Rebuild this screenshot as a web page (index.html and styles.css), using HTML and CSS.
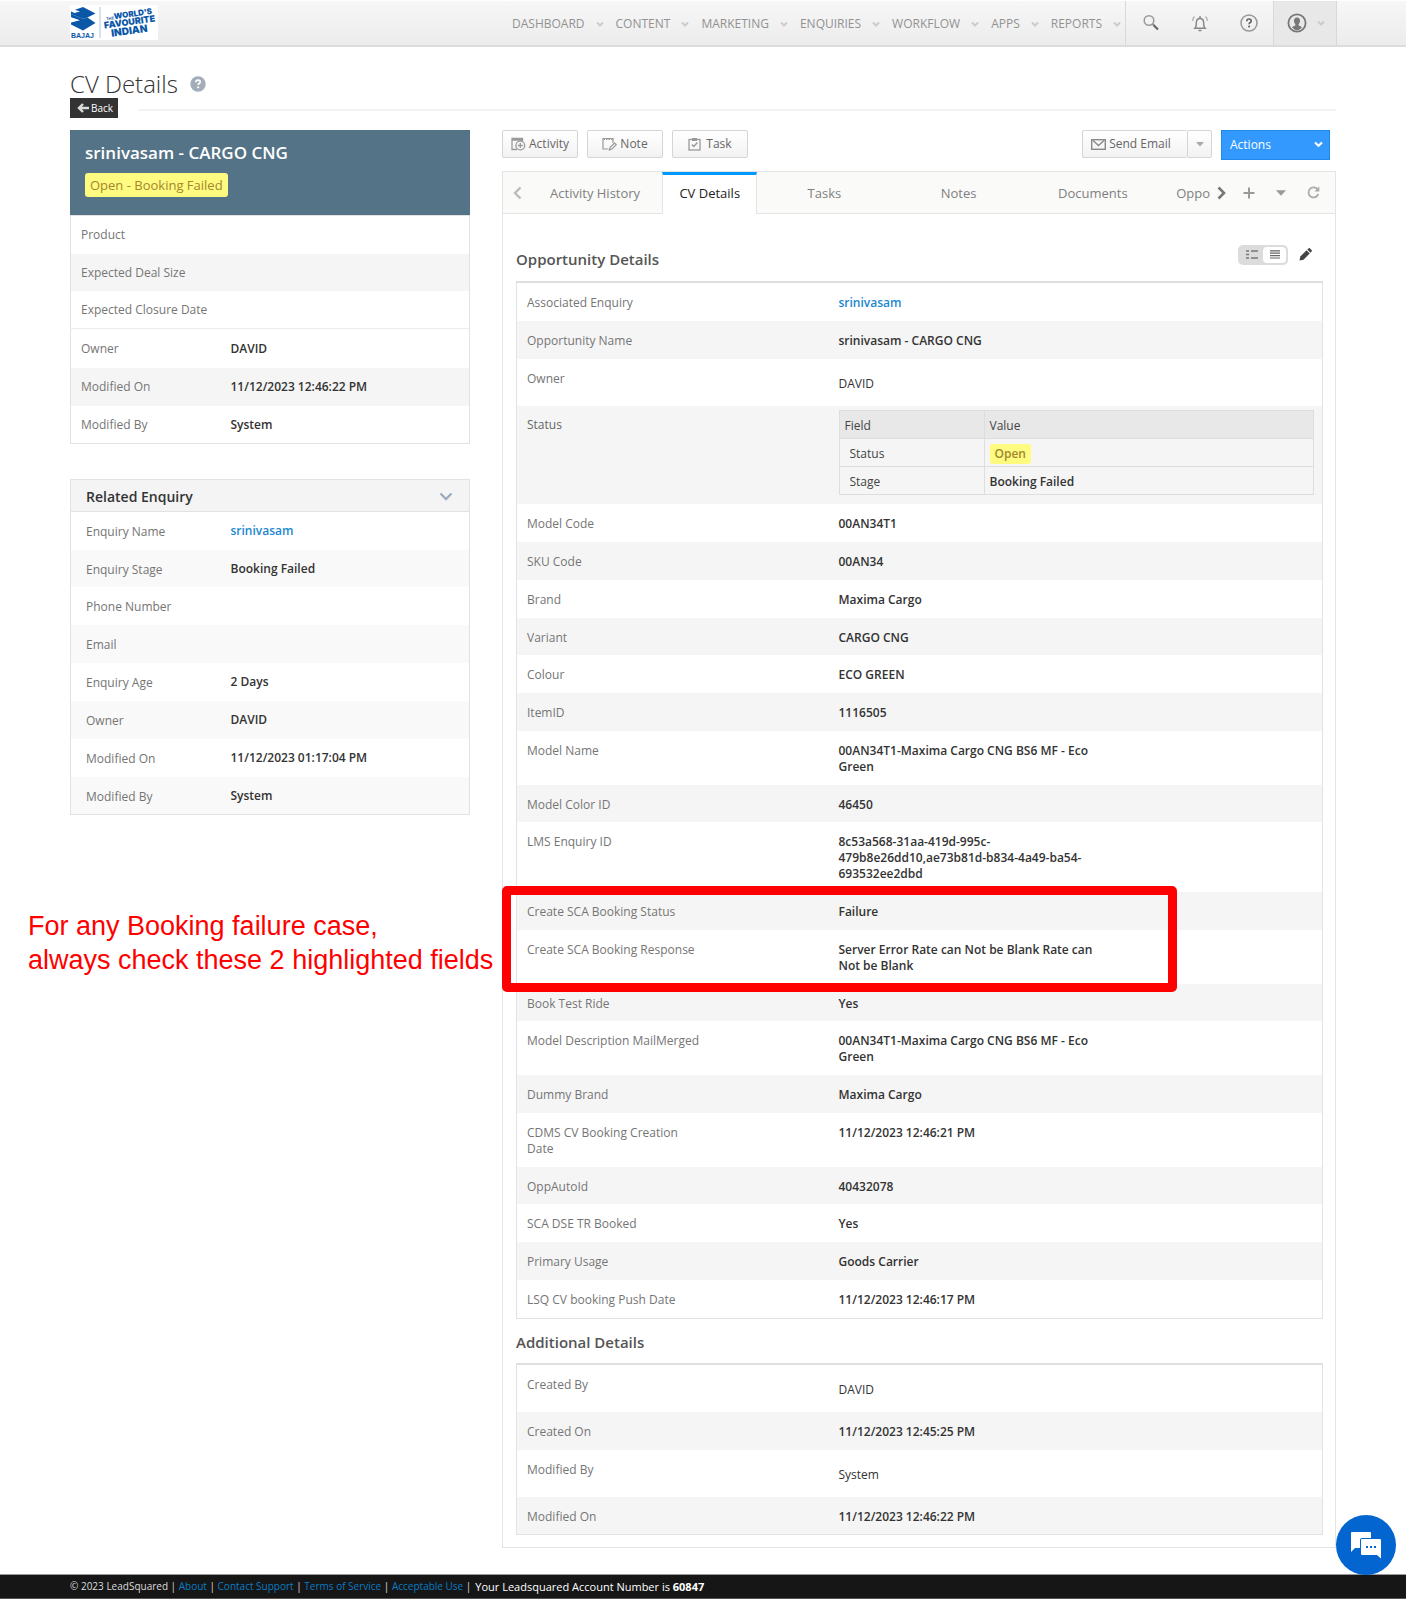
FILE: index.html
```html
<!DOCTYPE html>
<html lang="en">
<head>
<meta charset="utf-8">
<title>CV Details</title>
<link rel="stylesheet" href="styles.css">
</head>
<body>
<header class="topbar">
  <a class="logo" href="#" aria-label="Bajaj">
    <svg width="88" height="35" viewBox="0 0 88 35">
      <rect width="88" height="35" fill="#fff"/>
      <g fill="#0a57a8">
        <path d="M13 2L25.500 8.500L17.500 12.500L13.500 14L1 9V6.500L4.500 8L10 6.500L5 4.800Z"/>
        <path d="M17.500 12.500L25.500 18L13 25.500L1 19.500L1 17.500L10 15.200L1 12.500V9L13.500 14Z"/>
        <path d="M1 12.200L8 14.800L1 17.200Z" fill="#fff"/>
        <text x="1" y="33" class="logo-name">BAJAJ</text>
        <rect x="29" y="2" width="2" height="31" fill="#d5e2f0"/>
        <g transform="rotate(-8 60 18)">
          <text x="37" y="12" class="logo-the">THE</text>
          <text x="45" y="12" class="logo-line">WORLD'S</text>
          <text x="34" y="20" class="logo-line logo-mid">FAVOURITE</text>
          <text x="40" y="29" class="logo-line logo-big">INDIAN</text>
        </g>
      </g>
    </svg>
  </a>
  <nav class="nav">
    <a href="#">DASHBOARD<svg class="chev" viewBox="0 0 8 6"><path d="M1 1.500l3 3 3-3"/></svg></a>
    <a href="#">CONTENT<svg class="chev" viewBox="0 0 8 6"><path d="M1 1.500l3 3 3-3"/></svg></a>
    <a href="#">MARKETING<svg class="chev" viewBox="0 0 8 6"><path d="M1 1.500l3 3 3-3"/></svg></a>
    <a href="#">ENQUIRIES<svg class="chev" viewBox="0 0 8 6"><path d="M1 1.500l3 3 3-3"/></svg></a>
    <a href="#">WORKFLOW<svg class="chev" viewBox="0 0 8 6"><path d="M1 1.500l3 3 3-3"/></svg></a>
    <a href="#">APPS<svg class="chev" viewBox="0 0 8 6"><path d="M1 1.500l3 3 3-3"/></svg></a>
    <a href="#">REPORTS<svg class="chev" viewBox="0 0 8 6"><path d="M1 1.500l3 3 3-3"/></svg></a>
  </nav>
  <div class="tools">
    <button class="tool" aria-label="Search"><svg width="18" height="18" viewBox="0 0 18 18" fill="none"><circle cx="7" cy="6.500" r="4.800" stroke="#999" stroke-width="1.500"/><path d="M10.500 10l1.500 1.500" stroke="#888" stroke-width="1.500"/><path d="M11.500 11l4.500 4.500" stroke="#666" stroke-width="2.200"/></svg></button>
    <button class="tool" aria-label="Notifications"><svg width="18" height="18" viewBox="0 0 18 18" fill="none" stroke="#888" stroke-width="1.500"><path d="M4 14.300c1.500-1.500 1.300-3 1.300-5.300 0-2.800 1.500-4.600 3.700-4.600s3.700 1.800 3.700 4.600c0 2.300-.2 3.800 1.300 5.300z"/><path d="M9 2v2.400M7.500 16.500h3"/><path d="M3.500 2.500C2.200 3.500 1.600 5 1.600 7M14.500 2.500c1.300 1 1.900 2.500 1.900 4.500" stroke-width="1.200" stroke="#aaa"/></svg></button>
    <button class="tool" aria-label="Help"><svg width="18" height="18" viewBox="0 0 18 18"><circle cx="9" cy="9" r="8" fill="none" stroke="#999" stroke-width="1.500"/><path d="M6.800 7.200c0-1.500 1-2.200 2.200-2.200s2.200.8 2.200 2c0 1.500-2.100 1.600-2.100 3.200" fill="none" stroke="#666" stroke-width="1.700"/><circle cx="9.100" cy="12.500" r="1.100" fill="#666"/></svg></button>
  </div>
  <button class="user" aria-label="Account">
    <svg width="20" height="20" viewBox="0 0 20 20"><circle cx="10" cy="10" r="8.600" fill="none" stroke="#777" stroke-width="1.800"/><path d="M10 4.500c2 0 3 1.400 3 3.200 0 1.500-.6 2.600-1.300 3.200v1.600l3.300 1.500c-1 2-3 3.200-5 3.200s-4-1.200-5-3.200l3.300-1.500v-1.600C7.600 10.300 7 9.200 7 7.700c0-1.800 1-3.200 3-3.200z" fill="#777"/></svg>
    <svg class="chev" viewBox="0 0 8 6"><path d="M1 1.500l3 3 3-3"/></svg>
  </button>
</header>

<main class="page">
  <div class="title-row">
    <h1>CV Details</h1>
    <svg width="16" height="16" viewBox="0 0 16 16"><circle cx="8" cy="8" r="7.700" fill="#a3adb8"/><path d="M5.800 6.300C5.800 4.900 6.800 4.200 8 4.200s2.200.7 2.200 1.900c0 1.400-2 1.500-2 2.900" fill="none" stroke="#fff" stroke-width="1.700"/><circle cx="8.200" cy="11.300" r="1.100" fill="#fff"/></svg>
  </div>
  <div class="back-row">
    <button class="back"><svg width="12" height="10" viewBox="0 0 12 10"><path d="M6 1L2 5l4 4M2 5h10" fill="none" stroke="#ddd" stroke-width="2.400"/></svg>Back</button>
    <hr>
  </div>

  <div class="columns">
    <aside class="side">
      <section class="card">
        <div class="lead">
          <h2>srinivasam - CARGO CNG</h2>
          <span class="badge">Open - Booking Failed</span>
        </div>
        <table class="facts">
          <tr><th>Product</th><td></td></tr>
          <tr><th>Expected Deal Size</th><td></td></tr>
          <tr><th>Expected Closure Date</th><td></td></tr>
          <tr class="ruled"><th>Owner</th><td>DAVID</td></tr>
          <tr><th>Modified On</th><td>11/12/2023 12:46:22 PM</td></tr>
          <tr><th>Modified By</th><td>System</td></tr>
        </table>
      </section>
      <section class="card related">
        <div class="related-head"><h3>Related Enquiry</h3><svg width="14" height="9" viewBox="0 0 14 9"><path d="M1.500 1.500L7 7l5.500-5.500" fill="none" stroke="#9badc0" stroke-width="2.400"/></svg></div>
        <table class="facts">
          <tr><th>Enquiry Name</th><td><a href="#">srinivasam</a></td></tr>
          <tr><th>Enquiry Stage</th><td>Booking Failed</td></tr>
          <tr><th>Phone Number</th><td></td></tr>
          <tr><th>Email</th><td></td></tr>
          <tr><th>Enquiry Age</th><td>2 Days</td></tr>
          <tr><th>Owner</th><td>DAVID</td></tr>
          <tr><th>Modified On</th><td>11/12/2023 01:17:04 PM</td></tr>
          <tr><th>Modified By</th><td>System</td></tr>
        </table>
      </section>
    </aside>

    <section class="main">
      <div class="toolbar">
        <button class="btn"><svg width="15" height="14" viewBox="0 0 15 14" fill="none" stroke="#999" stroke-width="1.300"><path d="M6 12.500H1V1.500h10.500V4M1 3h10.500"/><circle cx="9.300" cy="8.500" r="4.400"/><path d="M9.300 6v5M6.800 8.500h5"/></svg>Activity</button>
        <button class="btn"><svg width="15" height="14" viewBox="0 0 15 14" fill="none" stroke="#999" stroke-width="1.200"><path d="M6.500 12H1V1.500h10V6"/><path d="M1.500 2.500h9.500" stroke-dasharray="1.500 1"/><path d="M7.500 13l.7-2.700L12.600 6l1.600 1.600-4.400 4.500z"/></svg>Note</button>
        <button class="btn task"><svg width="13" height="14" viewBox="0 0 13 14" fill="none" stroke="#999" stroke-width="1.300"><rect x="1" y="2.500" width="11" height="10.500"/><path d="M4 2.500h5" stroke-width="3"/><path d="M3.800 7.500l2 2 3.600-4" stroke-width="1.500"/></svg>Task</button>
        <div class="split">
          <button class="btn send"><svg width="15" height="11" viewBox="0 0 15 11" fill="none" stroke="#888" stroke-width="1.400"><rect x=".7" y=".7" width="13.600" height="9.600"/><path d="M2 1.500l5.500 5 5.500-5"/></svg>Send Email</button>
          <button class="btn drop" aria-label="More email options"><svg width="8" height="5" viewBox="0 0 8 5"><path d="M0 0h8L4 4.500z" fill="#aaa"/></svg></button>
        </div>
        <button class="actions">Actions<svg width="9" height="7" viewBox="0 0 9 7"><path d="M1 1.500l3.500 3.300L8 1.500" fill="none" stroke="#fff" stroke-width="2.200"/></svg></button>
      </div>

      <div class="panel">
        <div class="tabs">
          <button class="arrow" aria-label="Previous tabs"><svg width="9" height="14" viewBox="0 0 9 14"><path d="M7.500 1.500L2 7l5.500 5.500" fill="none" stroke="#bbb" stroke-width="2.400"/></svg></button>
          <a href="#" class="tab">Activity History</a>
          <a href="#" class="tab on">CV Details</a>
          <a href="#" class="tab">Tasks</a>
          <a href="#" class="tab">Notes</a>
          <a href="#" class="tab">Documents</a>
          <a href="#" class="tab cut">Oppo</a>
          <div class="tab-tools">
            <button aria-label="Next tabs"><svg width="9" height="14" viewBox="0 0 9 14"><path d="M1.500 1.500L7 7l-5.500 5.500" fill="none" stroke="#777" stroke-width="2.600"/></svg></button>
            <button class="add" aria-label="Add tab"><svg width="12" height="12" viewBox="0 0 12 12"><path d="M6 .5v11M.5 6h11" stroke="#999" stroke-width="2"/></svg></button>
            <button aria-label="Tab menu"><svg width="10" height="6" viewBox="0 0 10 6"><path d="M0 .3h10L5 5.800z" fill="#999"/></svg></button>
            <button aria-label="Refresh"><svg width="13" height="13" viewBox="0 0 13 13"><path d="M10.800 3.800A5 5 0 1 0 11.300 8" fill="none" stroke="#aaa" stroke-width="1.800"/><path d="M12.300.5v5H7.500z" fill="#aaa"/></svg></button>
          </div>
        </div>

        <div class="section-head first">
          <h3>Opportunity Details</h3>
          <div class="view">
            <button aria-label="Two column view"><svg width="12" height="9" viewBox="0 0 12 9" stroke="#777" stroke-width="1.500"><path d="M0 1h3M5 1h7M0 4.500h3M0 8h3M5 8h7"/></svg></button>
            <button class="on" aria-label="List view"><svg width="10" height="9" viewBox="0 0 10 9" stroke="#666" stroke-width="1.200"><path d="M0 .8h10M0 3.200h10M0 5.600h10M0 8h10"/></svg></button>
          </div>
          <button class="edit" aria-label="Edit"><svg width="13" height="13" viewBox="0 0 13 13" fill="#444"><path d="M.5 12.500l.8-4L7.600 2.200l3.200 3.200-6.300 6.300z"/><path d="M8.300 1.500L9.500.4c.5-.4 1-.4 1.500 0L12.600 2c.4.500.4 1 0 1.500l-1.100 1.200z"/></svg></button>
        </div>
        <div class="marked">
          <table class="detail">
            <tr><th>Associated Enquiry</th><td><a href="#">srinivasam</a></td></tr>
            <tr><th>Opportunity Name</th><td>srinivasam - CARGO CNG</td></tr>
            <tr class="person"><th>Owner</th><td>DAVID</td></tr>
            <tr class="status"><th>Status</th><td>
              <table class="inner">
                <thead><tr><th>Field</th><th>Value</th></tr></thead>
                <tbody>
                  <tr><td>Status</td><td><span class="badge">Open</span></td></tr>
                  <tr><td>Stage</td><td>Booking Failed</td></tr>
                </tbody>
              </table>
            </td></tr>
            <tr><th>Model Code</th><td>00AN34T1</td></tr>
            <tr><th>SKU Code</th><td>00AN34</td></tr>
            <tr><th>Brand</th><td>Maxima Cargo</td></tr>
            <tr><th>Variant</th><td>CARGO CNG</td></tr>
            <tr><th>Colour</th><td>ECO GREEN</td></tr>
            <tr><th>ItemID</th><td>1116505</td></tr>
            <tr><th>Model Name</th><td>00AN34T1-Maxima Cargo CNG BS6 MF - Eco<br>Green</td></tr>
            <tr><th>Model Color ID</th><td>46450</td></tr>
            <tr><th>LMS Enquiry ID</th><td>8c53a568-31aa-419d-995c-<br>479b8e26dd10,ae73b81d-b834-4a49-ba54-<br>693532ee2dbd</td></tr>
            <tr><th>Create SCA Booking Status</th><td>Failure</td></tr>
            <tr><th>Create SCA Booking Response</th><td>Server Error Rate can Not be Blank Rate can<br>Not be Blank</td></tr>
            <tr><th>Book Test Ride</th><td>Yes</td></tr>
            <tr><th>Model Description MailMerged</th><td>00AN34T1-Maxima Cargo CNG BS6 MF - Eco<br>Green</td></tr>
            <tr><th>Dummy Brand</th><td>Maxima Cargo</td></tr>
            <tr><th>CDMS CV Booking Creation<br>Date</th><td>11/12/2023 12:46:21 PM</td></tr>
            <tr><th>OppAutoId</th><td>40432078</td></tr>
            <tr><th>SCA DSE TR Booked</th><td>Yes</td></tr>
            <tr><th>Primary Usage</th><td>Goods Carrier</td></tr>
            <tr><th>LSQ CV booking Push Date</th><td>11/12/2023 12:46:17 PM</td></tr>
          </table>
          <div class="red-box"></div>
        </div>
        <div class="section-head"><h3>Additional Details</h3></div>
        <table class="detail">
          <tr class="person"><th>Created By</th><td>DAVID</td></tr>
          <tr><th>Created On</th><td>11/12/2023 12:45:25 PM</td></tr>
          <tr class="person"><th>Modified By</th><td>System</td></tr>
          <tr><th>Modified On</th><td>11/12/2023 12:46:22 PM</td></tr>
        </table>
      </div>
    </section>
  </div>
  <p class="callout">For any Booking failure case,<br>always check these 2 highlighted fields</p>
</main>

<footer class="footer">
  <span>© 2023 LeadSquared | <a href="#">About</a> | <a href="#">Contact Support</a> | <a href="#">Terms of Service</a> | <a href="#">Acceptable Use</a> |</span>
  <span class="account">Your Leadsquared Account Number is <b>60847</b></span>
</footer>
<button class="chat" aria-label="Chat"><svg width="32" height="28" viewBox="0 0 32 28"><path d="M2 1h18a1 1 0 0 1 1 1v5H12a2 2 0 0 0-2 2v8H5l-4 4V2a1 1 0 0 1 1-1z" fill="#fff"/><path d="M12 8h18a1 1 0 0 1 1 1v18.500L27 24H12a1 1 0 0 1-1-1V9a1 1 0 0 1 1-1z" fill="#fff"/><path d="M16 15h2v2h-2zM20 15h2v2h-2zM24 15h2v2h-2z" fill="#0365cf"/></svg></button>
</body>
</html>
```
FILE: styles.css
```css
* { box-sizing: border-box; }

body {
  margin: 0;
  font-family: "Open Sans", "Noto Sans", sans-serif;
  font-size: 12px;
  line-height: 16px;
  color: #333;
  background: #fff;
}

h1, h2, h3, p { margin: 0; }
a { color: #1a87d0; text-decoration: none; }
button { font: inherit; margin: 0; padding: 0; border: 0; background: none; color: inherit; cursor: pointer; }
svg { display: block; flex: none; }
table { border-collapse: collapse; width: 100%; }
th, td { padding: 0; text-align: left; vertical-align: top; }

/* Top bar */
.topbar {
  display: flex;
  height: 47px;
  padding: 0 69px 0 70px;
  background: linear-gradient(#f7f7f7, #ececec);
  border-top: 1px solid #fff;
  border-bottom: 2px solid #dcdcdc;
}
.logo { padding-top: 4px; margin-right: auto; }
.logo-name { font: bold 7px "Liberation Sans", sans-serif; }
.logo-the { font: bold 4px "Liberation Sans", sans-serif; }
.logo-line { font: 900 8px/8px Inter, sans-serif; }
.logo-mid { font-size: 9px; }
.logo-big { font-size: 10px; }
.nav { display: flex; }
.nav a { display: flex; align-items: center; gap: 11px; padding: 1px 12px 0 0; color: #929292; font-weight: 500; }
.chev { width: 8px; height: 6px; fill: none; stroke: #ccc; stroke-width: 2; }
.tools { display: flex; margin-left: -8px; border-left: 1px solid #d8d8d8; }
.tool { width: 49px; display: grid; place-items: center; }
.user { display: flex; align-items: center; gap: 10px; width: 64px; padding-left: 13px; background: #e8e8e8; border: solid #d8d8d8; border-width: 0 1px; }

/* Page head */
.page { position: relative; padding: 22px 70px 26px; }
.title-row { display: flex; align-items: center; gap: 12px; height: 29px; }
.title-row h1 { font-size: 24px; line-height: 28px; font-weight: 300; color: #333; }
.back-row { display: flex; align-items: center; gap: 20px; }
.back { display: flex; align-items: center; gap: 2px; width: 48px; height: 20px; padding-left: 7px; background: #333; color: #fff; font-size: 10px; }
.back-row hr { flex: 1; margin: 4px 0 0; border: 0; border-top: 2px solid #f3f3f3; }

.columns { display: flex; gap: 32px; margin-top: 12px; }
.side { flex: 0 0 400px; }
.main { flex: 1; min-width: 0; }

/* Left cards */
.lead { padding: 14px 15px 18px; background: #557387; }
.lead h2 { font-size: 17px; line-height: 18px; font-weight: 600; color: #fff; margin-bottom: 11px; }
.badge { display: inline-block; padding: 0 5px; border-radius: 3px; background: #fffa80; color: #a1872e; font-weight: 600; line-height: 20px; }
.lead .badge { display: block; width: max-content; font-size: 13px; font-weight: 500; line-height: 24px; }
.facts { table-layout: fixed; border: 1px solid #e2e2e2; }
.facts tr { height: 38px; }
.facts tr:nth-child(2) { height: 37px; }
.facts tr:nth-child(even) { background: #f5f5f5; }
.facts tr.ruled { height: 39px; background: #fff; border-top: 1px solid #ebebeb; }
.facts .ruled ~ tr:nth-child(5) { background: #f5f5f5; }
.facts .ruled ~ tr:nth-child(6) { background: #fff; }
.facts th { width: 160px; padding: 11px 0 10px 10px; font-weight: 400; color: #757575; }
.facts td { padding: 11px 0 10px; font-weight: 600; }
.facts .ruled > * { padding-top: 12px; }
.related { margin-top: 35px; }
.related-head { display: flex; align-items: center; justify-content: space-between; height: 32px; padding: 2px 16px 0 15px; background: #f4f4f4; border: 1px solid #e2e2e2; border-bottom: 0; }
.related-head h3 { font-size: 14px; font-weight: 600; }
.related .facts th { padding: 12px 0 9px 15px; }
.related .facts tr:nth-child(even) { background: #f9f9f9; }

/* Toolbar */
.toolbar { display: flex; align-items: flex-start; gap: 9px; height: 41px; padding-right: 6px; }
.btn { display: flex; align-items: center; justify-content: center; gap: 3px; flex: none; width: 76px; height: 28px; border: 1px solid #d5d5d5; border-radius: 2px; background: linear-gradient(#fff, #f2f2f2); color: #666; }
.task { gap: 5px; }
.split { display: flex; margin-left: auto; }
.send { width: 105px; padding-right: 8px; border-right: 0; }
.drop { width: 25px; }
.actions { display: flex; align-items: center; justify-content: space-between; width: 109px; height: 30px; padding: 0 6px 1px 8px; background: #3399ff; border: 1px solid #1f8ae8; color: #fff; }

/* Panel and tabs */
.panel { border: 1px solid #e4e4e4; padding: 0 12px 12px 13px; }
.tabs { display: flex; height: 42px; margin: 0 -12px 0 -13px; background: #fafaf9; border-bottom: 1px solid #e4e4e4; }
.arrow { width: 25px; padding-left: 10px; }
.tab { flex: 1 1 0; display: flex; align-items: center; justify-content: center; color: #808080; font-size: 13px; font-weight: 500; white-space: nowrap; }
.tab.on { flex: 0 0 95px; margin-bottom: -1px; padding-bottom: 4px; background: #fff; color: #222; border: 1px solid #e4e4e4; border-top: 3px solid #0099ff; border-bottom: 0; }
.tab.cut { flex: 0 0 50px; justify-content: flex-end; }
.tab-tools { display: flex; align-items: center; gap: 21px; width: 125px; padding-left: 7px; }
.tab-tools .add { margin-left: -4px; }

.section-head { display: flex; align-items: center; height: 44px; padding-top: 1px; }
.section-head.first { height: 67px; padding-top: 22px; }
.section-head h3 { margin-right: auto; font-size: 15px; line-height: 20px; font-weight: 600; color: #555; }
.view { display: flex; align-items: center; width: 50px; height: 20px; margin: -8px 11px 0 0; padding: 2px; border-radius: 5px; background: #dcdcdc; }
.view button { display: grid; place-items: center; width: 23px; height: 16px; border-radius: 4px; }
.view .on { background: #fff; }
.edit { margin: -8px 11px 0 0; }

.detail { border: 1px solid #e2e2e2; border-top: 2px solid #dedede; table-layout: fixed; }
.detail > tbody > tr:nth-child(even) { background: #f5f5f5; }
.detail > tbody > tr > th { width: 322px; padding: 12px 0 10px 10px; font-weight: 400; color: #757575; }
.detail > tbody > tr > td { padding: 12px 0 10px; font-weight: 600; }
.detail > tbody > tr:nth-child(4n):not(.status) > * { padding-bottom: 9px; }
.detail > tbody > .person > td { padding: 17px 0 14px; font-weight: 400; }
.detail > tbody > .status > th { padding-top: 11px; color: #666; }
.detail > tbody > .status > td { padding: 4px 8px 9px 0; }
.inner { border: 1px solid #dedede; table-layout: fixed; }
.inner th, .inner td { height: 28px; padding: 2px 5px 0; vertical-align: middle; border: 1px solid #dedede; font-weight: 400; color: #444; }
.inner thead { background: #e8e8e8; }
.inner th:first-child { width: 145px; }
.inner td:first-child { padding-left: 10px; }
.inner td:last-child { font-weight: 600; color: #333; }

/* Annotations */
.marked { position: relative; }
.red-box { position: absolute; left: -14px; top: 605px; width: 675px; height: 106px; border: 9px solid #f00; border-radius: 5px; }
.callout { position: absolute; left: 28px; top: 862px; font: 27px/34px "Liberation Sans", Arial, sans-serif; color: #f00; }

/* Footer */
.footer { display: flex; gap: 4px; height: 25px; padding: 3px 70px; background: #161616; border-top: 1px solid #999; border-bottom: 1px solid #555; color: #ddd; font-size: 10px; }
.footer a { color: #0a7cc4; }
.account { padding-top: 1px; color: #fff; font-size: 11px; }
.chat { position: fixed; right: 10px; bottom: 25px; display: grid; place-items: center; width: 60px; height: 60px; border-radius: 50%; background: #0365cf; }
```
